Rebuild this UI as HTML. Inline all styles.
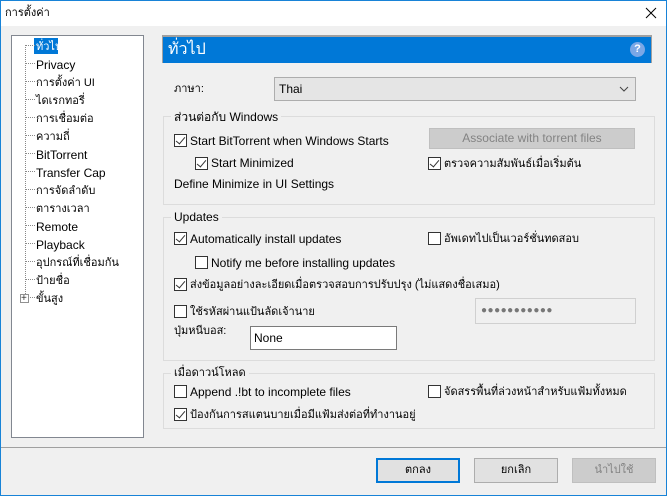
<!DOCTYPE html>
<html><head><meta charset="utf-8"><style>
*{box-sizing:border-box;margin:0;padding:0}
body{width:667px;height:496px;position:relative;overflow:hidden;background:#f0f0f0;font-family:"Liberation Sans","Noto Sans CJK SC",sans-serif;font-size:12px;color:#000}
.a{position:absolute;white-space:nowrap;line-height:14px}
.cb{position:absolute;width:13px;height:13px;border:1px solid #333;background:#fff}
.cb.c::after{content:"";position:absolute;left:3px;top:0px;width:4px;height:8px;border:solid #333;border-width:0 1.3px 1.3px 0;transform:rotate(40deg)}
.g{position:absolute;border:1px solid #dcdcdc;left:163px;width:492px}
.lg{position:absolute;background:#f0f0f0;padding:0 3px;left:171px;line-height:14px}
.t{font-size:11px}
.btn{position:absolute;top:458px;width:84px;height:25px;background:#e1e1e1;border:1px solid #adadad;text-align:center;line-height:23px;font-size:11px}
</style></head><body>
<div style="position:absolute;left:0;top:0;width:667px;height:496px;border:1px solid #1883d7"></div>
<div style="position:absolute;left:1px;top:1px;width:665px;height:25px;background:#fff"></div>
<div class="a" style="left:5px;top:6px;font-size:11px">การตั้งค่า</div>
<svg style="position:absolute;left:645px;top:7px" width="12" height="12"><path d="M1 1L11 11M11 1L1 11" stroke="#000" stroke-width="1"/></svg>

<div style="position:absolute;left:11px;top:35px;width:133px;height:403px;background:#fff;border:1px solid #828790"></div>
<div style="position:absolute;left:25px;top:45px;height:249px;border-left:1px dotted #888"></div>
<div style="position:absolute;left:34px;top:38px;width:24px;height:16px;background:#0078d7"></div>
<div id="tree"></div>
<div style="position:absolute;left:20px;top:294px;width:9px;height:9px;border:1px solid #919191;background:#fff"></div>
<div class="a" style="left:21px;top:292px;font-size:10px;color:#333">+</div>
<script>
var it=["ทั่วไป","Privacy","การตั้งค่า UI","ไดเรกทอรี่","การเชื่อมต่อ","ความถี่","BitTorrent","Transfer Cap","การจัดลำดับ","ตารางเวลา","Remote","Playback","อุปกรณ์ที่เชื่อมกัน","ป้ายชื่อ","ขั้นสูง"];
var h="";for(var i=0;i<it.length;i++){var y=45+18*i;var th=/[ก-๛]/.test(it[i]);h+='<div style="position:absolute;left:'+(i==14?30:26)+'px;top:'+y+'px;width:'+(i==14?5:9)+'px;border-top:1px dotted #888"></div><div class="a" style="left:36px;top:'+(y-5)+'px;'+(th?'font-size:11px;':'')+(i==0?'color:#fff':'')+'">'+it[i]+'</div>';}
document.getElementById("tree").innerHTML=h;
</script>

<div style="position:absolute;left:162px;top:35px;width:490px;height:28px;border:1px solid #a0a0a0;border-bottom:none;background:#0078d7;border-top:2px solid #a0a0a0"></div>
<div class="a" style="left:168px;top:41px;font-size:16px;line-height:18px;color:#fff">ทั่วไป</div>
<div style="position:absolute;left:630px;top:42px;width:15px;height:15px;border-radius:50%;background:#7aa7e6;color:#fff;font-size:11px;font-weight:bold;text-align:center;line-height:15px">?</div>

<div class="a t" style="left:174px;top:82px">ภาษา:</div>
<div style="position:absolute;left:274px;top:77px;width:362px;height:24px;background:#e5e5e5;border:1px solid #adadad"></div>
<div class="a" style="left:279px;top:82px">Thai</div>
<svg style="position:absolute;left:619px;top:86px" width="10" height="6"><path d="M1 1L5 5L9 1" stroke="#444" fill="none"/></svg>

<div class="g" style="top:116px;height:89px"></div>
<div class="lg" style="top:110px">ส่วนต่อกับ Windows</div>
<div class="cb c" style="left:174px;top:134px"></div><div class="a" style="left:190px;top:134px">Start BitTorrent when Windows Starts</div>
<div style="position:absolute;left:429px;top:128px;width:206px;height:21px;background:#cccccc;border:1px solid #bfbfbf;color:#838383;text-align:center;line-height:19px">Associate with torrent files</div>
<div class="cb c" style="left:195px;top:157px"></div><div class="a" style="left:211px;top:156px">Start Minimized</div>
<div class="cb c" style="left:428px;top:157px"></div><div class="a t" style="left:444px;top:157px">ตรวจความสัมพันธ์เมื่อเริ่มต้น</div>
<div class="a" style="left:174px;top:177px">Define Minimize in UI Settings</div>

<div class="g" style="top:217px;height:144px"></div>
<div class="lg" style="top:210px">Updates</div>
<div class="cb c" style="left:174px;top:232px"></div><div class="a" style="left:190px;top:232px">Automatically install updates</div>
<div class="cb" style="left:428px;top:232px"></div><div class="a t" style="left:444px;top:232px">อัพเดทไปเป็นเวอร์ชั่นทดสอบ</div>
<div class="cb" style="left:195px;top:256px"></div><div class="a" style="left:211px;top:256px">Notify me before installing updates</div>
<div class="cb c" style="left:174px;top:278px"></div><div class="a t" style="left:190px;top:278px">ส่งข้อมูลอย่างละเอียดเมื่อตรวจสอบการปรับปรุง (ไม่แสดงชื่อเสมอ)</div>
<div class="cb" style="left:174px;top:305px"></div><div class="a t" style="left:190px;top:305px">ใช้รหัสผ่านแป้นลัดเจ้านาย</div>
<div style="position:absolute;left:475px;top:298px;width:161px;height:26px;border:1px solid #d0d0d0;background:#f0f0f0"></div>
<div class="a" style="left:481px;top:304px;color:#777;font-size:10px;letter-spacing:0.5px">●●●●●●●●●●●</div>
<div class="a t" style="left:174px;top:324px">ปุ่มหนีบอส:</div>
<div style="position:absolute;left:250px;top:326px;width:147px;height:24px;border:1px solid #7a7a7a;background:#fff"></div>
<div class="a" style="left:254px;top:331px">None</div>

<div class="g" style="top:373px;height:56px"></div>
<div class="lg t" style="top:366px">เมื่อดาวน์โหลด</div>
<div class="cb" style="left:174px;top:385px"></div><div class="a" style="left:190px;top:385px">Append .!bt to incomplete files</div>
<div class="cb" style="left:428px;top:385px"></div><div class="a t" style="left:444px;top:385px">จัดสรรพื้นที่ล่วงหน้าสำหรับแฟ้มทั้งหมด</div>
<div class="cb c" style="left:174px;top:408px"></div><div class="a t" style="left:190px;top:408px">ป้องกันการสแตนบายเมื่อมีแฟ้มส่งต่อที่ทำงานอยู่</div>

<div style="position:absolute;left:1px;top:447px;width:665px;border-top:1px solid #a0a0a0"></div>
<div class="btn" style="left:376px;border:2px solid #0078d7;line-height:21px">ตกลง</div>
<div class="btn" style="left:474px">ยกเลิก</div>
<div class="btn" style="left:572px;background:#cccccc;border-color:#bfbfbf;color:#838383">นำไปใช้</div>
</body></html>
